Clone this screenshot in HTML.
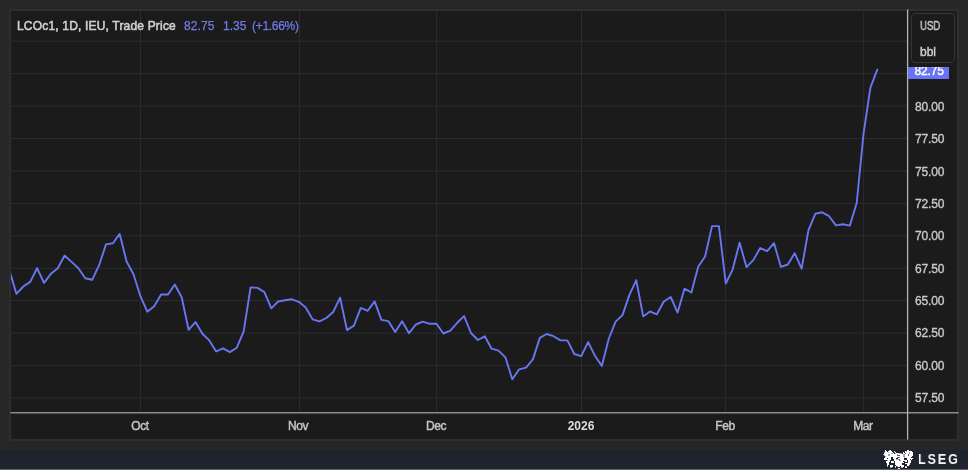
<!DOCTYPE html>
<html><head><meta charset="utf-8"><title>LCOc1</title>
<style>
html,body{margin:0;padding:0;}
body{width:968px;height:470px;overflow:hidden;background:#262626;font-family:"Liberation Sans",sans-serif;position:relative;}
#panel{position:absolute;left:9px;top:9px;width:946px;height:428px;background:#1b1b1b;border:2px solid #2e2e2e;}
#footer{position:absolute;left:0;top:450px;width:968px;height:20px;background:#1f232e;}
#footer:after{content:"";position:absolute;left:0;bottom:0;width:968px;height:1.3px;background:#5e636d;}
svg{position:absolute;left:0;top:0;}
.t,.yl,.xl,#last{will-change:transform;}
.t{position:absolute;white-space:nowrap;font-size:12px;line-height:16px;}
#title{left:17px;top:17px;transform:translateY(0.5px);color:#d0d0d0;-webkit-text-stroke:0.55px #d0d0d0;letter-spacing:0.18px;}
.v{top:17.5px;color:#6f7de9;-webkit-text-stroke:0.25px #6f7de9;}
#v1{left:183.8px;letter-spacing:0.12px;}
#v2{left:222.6px;}
#v3{left:251.5px;letter-spacing:-0.3px;}
.yl{position:absolute;left:915px;width:40px;font-size:12px;line-height:16px;color:#c9c9c9;-webkit-text-stroke:0.35px #c9c9c9;letter-spacing:-0.15px;white-space:nowrap;}
.xl{position:absolute;top:418.2px;width:60px;text-align:center;font-size:12px;line-height:16px;color:#c4c4c4;-webkit-text-stroke:0.45px #c4c4c4;letter-spacing:-0.45px;white-space:nowrap;}
.xl.b{color:#dcdcdc;font-weight:bold;-webkit-text-stroke:0;letter-spacing:0;}
#unit{position:absolute;left:910.5px;top:12.5px;width:42px;height:48px;border:1px solid #353535;border-radius:4px;}
#usd{left:919.6px;top:18.3px;color:#d0d0d0;-webkit-text-stroke:0.4px #d0d0d0;transform:scaleX(0.8);transform-origin:0 0;}
#bbl{left:919.8px;top:43.7px;color:#d0d0d0;-webkit-text-stroke:0.4px #d0d0d0;}
#last{position:absolute;left:908.4px;top:66.7px;width:40.8px;height:12.4px;background:#6874f4;overflow:hidden;}
#last span{position:absolute;left:6.5px;top:-3.9px;color:#fff;font-size:12px;line-height:16px;-webkit-text-stroke:0.4px #fff;letter-spacing:-0.15px;white-space:nowrap;}
#lseg{left:918.4px;top:449.7px;font-size:15.4px;line-height:18px;color:#f6f6f6;font-weight:bold;letter-spacing:2.35px;transform:scaleX(0.815);transform-origin:0 0;}
</style></head><body>
<div id="panel"></div>
<div id="footer"></div>
<svg width="968" height="470" viewBox="0 0 968 470">
<g stroke="#2c2d31" stroke-width="1" fill="none">
<line x1="11" x2="907" y1="41.2" y2="41.2"/>
<line x1="11" x2="907" y1="73.7" y2="73.7"/>
<line x1="11" x2="907" y1="106.1" y2="106.1"/>
<line x1="11" x2="907" y1="138.5" y2="138.5"/>
<line x1="11" x2="907" y1="171.0" y2="171.0"/>
<line x1="11" x2="907" y1="203.4" y2="203.4"/>
<line x1="11" x2="907" y1="235.8" y2="235.8"/>
<line x1="11" x2="907" y1="268.3" y2="268.3"/>
<line x1="11" x2="907" y1="300.7" y2="300.7"/>
<line x1="11" x2="907" y1="333.1" y2="333.1"/>
<line x1="11" x2="907" y1="365.6" y2="365.6"/>
<line x1="11" x2="907" y1="398.0" y2="398.0"/>
<line x1="140.4" x2="140.4" y1="11" y2="412"/>
<line x1="299.6" x2="299.6" y1="11" y2="412"/>
<line x1="436.7" x2="436.7" y1="11" y2="412"/>
<line x1="581.5" x2="581.5" y1="11" y2="412"/>
<line x1="725.4" x2="725.4" y1="11" y2="412"/>
<line x1="863.7" x2="863.7" y1="11" y2="412"/>
</g>
<line x1="10.5" x2="958.5" y1="412.8" y2="412.8" stroke="#8c8c8c" stroke-width="1.4"/>
<line x1="907.6" x2="907.6" y1="9.5" y2="439.5" stroke="#b4b4b4" stroke-width="1.3"/>
<clipPath id="cp"><rect x="11" y="11" width="896" height="401"/></clipPath>
<polyline clip-path="url(#cp)" points="9.6,271.0 16.4,293.8 23.3,286.5 30.2,281.9 37.1,268.2 44.0,282.8 50.9,273.8 57.8,268.2 64.6,255.5 71.5,261.9 78.4,268.2 85.3,278.3 92.2,279.8 99.1,265.2 106.0,244.4 112.9,243.2 119.7,233.9 126.6,261.5 133.5,274.3 140.4,296.2 147.3,311.7 154.2,306.2 161.1,294.5 168.0,294.5 174.8,284.5 181.7,297.2 188.6,329.8 195.5,322.1 202.4,333.8 209.3,340.4 216.2,351.5 223.0,348.3 229.9,352.1 236.8,347.7 243.7,331.3 250.6,287.4 257.5,287.9 264.4,292.1 271.3,308.3 278.1,301.5 285.0,300.3 291.9,299.3 298.8,301.8 305.7,307.4 312.6,319.3 319.5,321.4 326.4,318.0 333.2,312.0 340.1,297.7 347.0,330.1 353.9,325.6 360.8,307.9 367.7,310.8 374.6,301.4 381.4,319.9 388.3,321.1 395.2,332.1 402.1,321.2 409.0,333.2 415.9,324.5 422.8,321.6 429.7,323.8 436.5,323.8 443.4,333.5 450.3,330.6 457.2,322.8 464.1,316.1 471.0,333.0 477.9,340.0 484.8,336.3 491.6,348.7 498.5,350.6 505.4,357.4 512.3,379.2 519.2,369.3 526.1,367.6 533.0,359.1 539.8,337.9 546.7,334.0 553.6,336.2 560.5,340.4 567.4,340.4 574.3,354.0 581.2,356.1 588.1,342.1 594.9,355.7 601.8,365.9 608.7,339.0 615.6,321.6 622.5,315.1 629.4,294.9 636.3,280.2 643.2,316.4 650.0,311.5 656.9,314.3 663.8,301.5 670.7,297.0 677.6,312.6 684.5,288.7 691.4,292.5 698.2,266.7 705.1,256.5 712.0,226.1 718.9,226.1 725.8,283.5 732.7,269.3 739.6,242.7 746.5,267.1 753.3,260.1 760.2,248.0 767.1,251.2 774.0,243.1 780.9,266.9 787.8,264.5 794.7,253.2 801.6,268.7 808.4,230.4 815.3,213.8 822.2,212.3 829.1,216.2 836.0,225.4 842.9,224.2 849.8,225.6 856.7,203.0 863.5,134.0 870.4,87.7 877.3,69.6" fill="none" stroke="#6876f2" stroke-width="1.9" stroke-linejoin="round" stroke-linecap="round"/>
<filter id="bl" x="-10%" y="-10%" width="120%" height="120%"><feGaussianBlur stdDeviation="0.4"/></filter>
<g fill="#ffffff" filter="url(#bl)"><rect x="883" y="454" width="1" height="1" opacity="0.6"/><rect x="884" y="452" width="1" height="1" opacity="0.6"/><rect x="884" y="453" width="1" height="1" opacity="1"/><rect x="884" y="454" width="1" height="1" opacity="1"/><rect x="884" y="455" width="1" height="1" opacity="0.6"/><rect x="884" y="458" width="1" height="1" opacity="1"/><rect x="884" y="459" width="1" height="1" opacity="1"/><rect x="885" y="450" width="1" height="1" opacity="1"/><rect x="885" y="451" width="1" height="1" opacity="1"/><rect x="885" y="452" width="1" height="1" opacity="1"/><rect x="885" y="453" width="1" height="1" opacity="1"/><rect x="885" y="454" width="1" height="1" opacity="1"/><rect x="885" y="455" width="1" height="1" opacity="1"/><rect x="885" y="456" width="1" height="1" opacity="0.6"/><rect x="885" y="457" width="1" height="1" opacity="1"/><rect x="885" y="458" width="1" height="1" opacity="1"/><rect x="885" y="459" width="1" height="1" opacity="1"/><rect x="886" y="451" width="1" height="1" opacity="1"/><rect x="886" y="452" width="1" height="1" opacity="1"/><rect x="886" y="453" width="1" height="1" opacity="1"/><rect x="886" y="454" width="1" height="1" opacity="1"/><rect x="886" y="455" width="1" height="1" opacity="1"/><rect x="886" y="456" width="1" height="1" opacity="1"/><rect x="886" y="457" width="1" height="1" opacity="1"/><rect x="886" y="458" width="1" height="1" opacity="1"/><rect x="886" y="459" width="1" height="1" opacity="1"/><rect x="886" y="461" width="1" height="1" opacity="1"/><rect x="886" y="462" width="1" height="1" opacity="1"/><rect x="887" y="452" width="1" height="1" opacity="1"/><rect x="887" y="453" width="1" height="1" opacity="1"/><rect x="887" y="454" width="1" height="1" opacity="1"/><rect x="887" y="455" width="1" height="1" opacity="1"/><rect x="887" y="456" width="1" height="1" opacity="1"/><rect x="887" y="457" width="1" height="1" opacity="1"/><rect x="887" y="459" width="1" height="1" opacity="1"/><rect x="887" y="460" width="1" height="1" opacity="0.6"/><rect x="887" y="461" width="1" height="1" opacity="1"/><rect x="887" y="462" width="1" height="1" opacity="1"/><rect x="887" y="463" width="1" height="1" opacity="1"/><rect x="887" y="464" width="1" height="1" opacity="1"/><rect x="887" y="465" width="1" height="1" opacity="1"/><rect x="887" y="466" width="1" height="1" opacity="0.6"/><rect x="888" y="451" width="1" height="1" opacity="1"/><rect x="888" y="452" width="1" height="1" opacity="0.6"/><rect x="888" y="453" width="1" height="1" opacity="1"/><rect x="888" y="454" width="1" height="1" opacity="0.6"/><rect x="888" y="455" width="1" height="1" opacity="0.6"/><rect x="888" y="456" width="1" height="1" opacity="1"/><rect x="888" y="457" width="1" height="1" opacity="1"/><rect x="888" y="458" width="1" height="1" opacity="1"/><rect x="888" y="459" width="1" height="1" opacity="1"/><rect x="888" y="460" width="1" height="1" opacity="1"/><rect x="888" y="461" width="1" height="1" opacity="1"/><rect x="888" y="462" width="1" height="1" opacity="1"/><rect x="888" y="463" width="1" height="1" opacity="1"/><rect x="888" y="464" width="1" height="1" opacity="1"/><rect x="889" y="450" width="1" height="1" opacity="0.6"/><rect x="889" y="451" width="1" height="1" opacity="1"/><rect x="889" y="452" width="1" height="1" opacity="1"/><rect x="889" y="453" width="1" height="1" opacity="1"/><rect x="889" y="454" width="1" height="1" opacity="0.6"/><rect x="889" y="455" width="1" height="1" opacity="0.6"/><rect x="889" y="456" width="1" height="1" opacity="1"/><rect x="889" y="457" width="1" height="1" opacity="1"/><rect x="889" y="458" width="1" height="1" opacity="1"/><rect x="889" y="459" width="1" height="1" opacity="1"/><rect x="889" y="460" width="1" height="1" opacity="1"/><rect x="889" y="461" width="1" height="1" opacity="1"/><rect x="890" y="450" width="1" height="1" opacity="1"/><rect x="890" y="451" width="1" height="1" opacity="1"/><rect x="890" y="452" width="1" height="1" opacity="1"/><rect x="890" y="453" width="1" height="1" opacity="1"/><rect x="890" y="454" width="1" height="1" opacity="1"/><rect x="890" y="455" width="1" height="1" opacity="1"/><rect x="890" y="456" width="1" height="1" opacity="1"/><rect x="890" y="457" width="1" height="1" opacity="1"/><rect x="890" y="458" width="1" height="1" opacity="1"/><rect x="890" y="459" width="1" height="1" opacity="1"/><rect x="890" y="465" width="1" height="1" opacity="1"/><rect x="890" y="466" width="1" height="1" opacity="1"/><rect x="890" y="467" width="1" height="1" opacity="0.6"/><rect x="891" y="451" width="1" height="1" opacity="1"/><rect x="891" y="452" width="1" height="1" opacity="1"/><rect x="891" y="453" width="1" height="1" opacity="0.6"/><rect x="891" y="454" width="1" height="1" opacity="1"/><rect x="891" y="455" width="1" height="1" opacity="1"/><rect x="891" y="456" width="1" height="1" opacity="1"/><rect x="891" y="461" width="1" height="1" opacity="1"/><rect x="891" y="462" width="1" height="1" opacity="1"/><rect x="891" y="465" width="1" height="1" opacity="1"/><rect x="891" y="466" width="1" height="1" opacity="1"/><rect x="891" y="467" width="1" height="1" opacity="0.6"/><rect x="892" y="452" width="1" height="1" opacity="1"/><rect x="892" y="453" width="1" height="1" opacity="0.6"/><rect x="892" y="454" width="1" height="1" opacity="1"/><rect x="892" y="455" width="1" height="1" opacity="1"/><rect x="892" y="456" width="1" height="1" opacity="1"/><rect x="892" y="461" width="1" height="1" opacity="1"/><rect x="892" y="462" width="1" height="1" opacity="1"/><rect x="892" y="465" width="1" height="1" opacity="1"/><rect x="892" y="466" width="1" height="1" opacity="1"/><rect x="893" y="453" width="1" height="1" opacity="1"/><rect x="893" y="454" width="1" height="1" opacity="1"/><rect x="893" y="455" width="1" height="1" opacity="1"/><rect x="893" y="456" width="1" height="1" opacity="1"/><rect x="893" y="457" width="1" height="1" opacity="1"/><rect x="893" y="458" width="1" height="1" opacity="1"/><rect x="893" y="461" width="1" height="1" opacity="1"/><rect x="893" y="462" width="1" height="1" opacity="1"/><rect x="894" y="451" width="1" height="1" opacity="1"/><rect x="894" y="454" width="1" height="1" opacity="1"/><rect x="894" y="455" width="1" height="1" opacity="1"/><rect x="894" y="456" width="1" height="1" opacity="1"/><rect x="894" y="457" width="1" height="1" opacity="1"/><rect x="894" y="458" width="1" height="1" opacity="1"/><rect x="894" y="459" width="1" height="1" opacity="1"/><rect x="894" y="460" width="1" height="1" opacity="1"/><rect x="895" y="452" width="1" height="1" opacity="1"/><rect x="895" y="453" width="1" height="1" opacity="0.6"/><rect x="895" y="454" width="1" height="1" opacity="1"/><rect x="895" y="455" width="1" height="1" opacity="1"/><rect x="895" y="456" width="1" height="1" opacity="1"/><rect x="895" y="457" width="1" height="1" opacity="1"/><rect x="895" y="458" width="1" height="1" opacity="1"/><rect x="895" y="459" width="1" height="1" opacity="1"/><rect x="895" y="460" width="1" height="1" opacity="1"/><rect x="895" y="461" width="1" height="1" opacity="1"/><rect x="895" y="462" width="1" height="1" opacity="1"/><rect x="895" y="463" width="1" height="1" opacity="1"/><rect x="895" y="464" width="1" height="1" opacity="1"/><rect x="895" y="466" width="1" height="1" opacity="1"/><rect x="895" y="467" width="1" height="1" opacity="0.6"/><rect x="896" y="453" width="1" height="1" opacity="1"/><rect x="896" y="454" width="1" height="1" opacity="1"/><rect x="896" y="455" width="1" height="1" opacity="1"/><rect x="896" y="456" width="1" height="1" opacity="1"/><rect x="896" y="457" width="1" height="1" opacity="1"/><rect x="896" y="459" width="1" height="1" opacity="0.6"/><rect x="896" y="460" width="1" height="1" opacity="1"/><rect x="896" y="461" width="1" height="1" opacity="1"/><rect x="896" y="462" width="1" height="1" opacity="1"/><rect x="896" y="463" width="1" height="1" opacity="1"/><rect x="896" y="464" width="1" height="1" opacity="1"/><rect x="896" y="465" width="1" height="1" opacity="1"/><rect x="897" y="453" width="1" height="1" opacity="1"/><rect x="897" y="454" width="1" height="1" opacity="0.6"/><rect x="897" y="455" width="1" height="1" opacity="0.28"/><rect x="897" y="456" width="1" height="1" opacity="1"/><rect x="897" y="457" width="1" height="1" opacity="0.28"/><rect x="897" y="459" width="1" height="1" opacity="0.6"/><rect x="897" y="460" width="1" height="1" opacity="1"/><rect x="897" y="461" width="1" height="1" opacity="1"/><rect x="897" y="462" width="1" height="1" opacity="1"/><rect x="897" y="463" width="1" height="1" opacity="1"/><rect x="897" y="464" width="1" height="1" opacity="1"/><rect x="897" y="465" width="1" height="1" opacity="1"/><rect x="897" y="466" width="1" height="1" opacity="0.6"/><rect x="898" y="453" width="1" height="1" opacity="1"/><rect x="898" y="454" width="1" height="1" opacity="1"/><rect x="898" y="455" width="1" height="1" opacity="0.28"/><rect x="898" y="456" width="1" height="1" opacity="1"/><rect x="898" y="457" width="1" height="1" opacity="0.28"/><rect x="898" y="458" width="1" height="1" opacity="1"/><rect x="898" y="459" width="1" height="1" opacity="0.6"/><rect x="898" y="460" width="1" height="1" opacity="1"/><rect x="898" y="461" width="1" height="1" opacity="1"/><rect x="898" y="462" width="1" height="1" opacity="1"/><rect x="898" y="463" width="1" height="1" opacity="1"/><rect x="898" y="464" width="1" height="1" opacity="1"/><rect x="898" y="465" width="1" height="1" opacity="1"/><rect x="898" y="466" width="1" height="1" opacity="1"/><rect x="898" y="468" width="1" height="1" opacity="1"/><rect x="899" y="453" width="1" height="1" opacity="0.6"/><rect x="899" y="454" width="1" height="1" opacity="1"/><rect x="899" y="455" width="1" height="1" opacity="0.28"/><rect x="899" y="456" width="1" height="1" opacity="1"/><rect x="899" y="457" width="1" height="1" opacity="0.28"/><rect x="899" y="458" width="1" height="1" opacity="1"/><rect x="899" y="459" width="1" height="1" opacity="0.28"/><rect x="899" y="460" width="1" height="1" opacity="0.28"/><rect x="899" y="461" width="1" height="1" opacity="1"/><rect x="899" y="462" width="1" height="1" opacity="1"/><rect x="899" y="463" width="1" height="1" opacity="1"/><rect x="899" y="464" width="1" height="1" opacity="1"/><rect x="899" y="465" width="1" height="1" opacity="1"/><rect x="899" y="466" width="1" height="1" opacity="1"/><rect x="899" y="468" width="1" height="1" opacity="1"/><rect x="900" y="453" width="1" height="1" opacity="0.6"/><rect x="900" y="454" width="1" height="1" opacity="1"/><rect x="900" y="455" width="1" height="1" opacity="1"/><rect x="900" y="456" width="1" height="1" opacity="1"/><rect x="900" y="457" width="1" height="1" opacity="1"/><rect x="900" y="458" width="1" height="1" opacity="1"/><rect x="900" y="459" width="1" height="1" opacity="1"/><rect x="900" y="460" width="1" height="1" opacity="0.6"/><rect x="900" y="461" width="1" height="1" opacity="1"/><rect x="900" y="462" width="1" height="1" opacity="1"/><rect x="900" y="463" width="1" height="1" opacity="1"/><rect x="900" y="464" width="1" height="1" opacity="1"/><rect x="900" y="465" width="1" height="1" opacity="1"/><rect x="901" y="453" width="1" height="1" opacity="0.6"/><rect x="901" y="454" width="1" height="1" opacity="1"/><rect x="901" y="455" width="1" height="1" opacity="1"/><rect x="901" y="456" width="1" height="1" opacity="1"/><rect x="901" y="457" width="1" height="1" opacity="1"/><rect x="901" y="458" width="1" height="1" opacity="1"/><rect x="901" y="459" width="1" height="1" opacity="1"/><rect x="901" y="460" width="1" height="1" opacity="1"/><rect x="901" y="461" width="1" height="1" opacity="1"/><rect x="901" y="462" width="1" height="1" opacity="1"/><rect x="901" y="463" width="1" height="1" opacity="1"/><rect x="901" y="464" width="1" height="1" opacity="1"/><rect x="901" y="465" width="1" height="1" opacity="1"/><rect x="901" y="466" width="1" height="1" opacity="1"/><rect x="901" y="467" width="1" height="1" opacity="0.6"/><rect x="902" y="454" width="1" height="1" opacity="1"/><rect x="902" y="455" width="1" height="1" opacity="1"/><rect x="902" y="456" width="1" height="1" opacity="1"/><rect x="902" y="457" width="1" height="1" opacity="1"/><rect x="902" y="458" width="1" height="1" opacity="1"/><rect x="902" y="459" width="1" height="1" opacity="1"/><rect x="902" y="460" width="1" height="1" opacity="1"/><rect x="902" y="461" width="1" height="1" opacity="1"/><rect x="902" y="462" width="1" height="1" opacity="1"/><rect x="902" y="465" width="1" height="1" opacity="1"/><rect x="902" y="466" width="1" height="1" opacity="1"/><rect x="902" y="467" width="1" height="1" opacity="0.6"/><rect x="903" y="452" width="1" height="1" opacity="1"/><rect x="903" y="453" width="1" height="1" opacity="1"/><rect x="903" y="454" width="1" height="1" opacity="0.6"/><rect x="903" y="455" width="1" height="1" opacity="0.6"/><rect x="903" y="456" width="1" height="1" opacity="0.6"/><rect x="903" y="457" width="1" height="1" opacity="1"/><rect x="903" y="458" width="1" height="1" opacity="1"/><rect x="903" y="459" width="1" height="1" opacity="1"/><rect x="903" y="460" width="1" height="1" opacity="1"/><rect x="903" y="462" width="1" height="1" opacity="1"/><rect x="903" y="465" width="1" height="1" opacity="1"/><rect x="903" y="466" width="1" height="1" opacity="1"/><rect x="904" y="453" width="1" height="1" opacity="1"/><rect x="904" y="454" width="1" height="1" opacity="0.6"/><rect x="904" y="455" width="1" height="1" opacity="0.6"/><rect x="904" y="456" width="1" height="1" opacity="0.6"/><rect x="904" y="457" width="1" height="1" opacity="0.6"/><rect x="904" y="460" width="1" height="1" opacity="1"/><rect x="905" y="451" width="1" height="1" opacity="1"/><rect x="905" y="452" width="1" height="1" opacity="1"/><rect x="905" y="453" width="1" height="1" opacity="0.28"/><rect x="905" y="454" width="1" height="1" opacity="1"/><rect x="905" y="455" width="1" height="1" opacity="1"/><rect x="905" y="456" width="1" height="1" opacity="1"/><rect x="905" y="457" width="1" height="1" opacity="1"/><rect x="905" y="460" width="1" height="1" opacity="1"/><rect x="905" y="461" width="1" height="1" opacity="1"/><rect x="905" y="463" width="1" height="1" opacity="1"/><rect x="905" y="466" width="1" height="1" opacity="0.6"/><rect x="905" y="467" width="1" height="1" opacity="1"/><rect x="906" y="451" width="1" height="1" opacity="0.6"/><rect x="906" y="452" width="1" height="1" opacity="1"/><rect x="906" y="453" width="1" height="1" opacity="1"/><rect x="906" y="454" width="1" height="1" opacity="1"/><rect x="906" y="455" width="1" height="1" opacity="1"/><rect x="906" y="456" width="1" height="1" opacity="1"/><rect x="906" y="457" width="1" height="1" opacity="1"/><rect x="906" y="460" width="1" height="1" opacity="1"/><rect x="906" y="461" width="1" height="1" opacity="1"/><rect x="906" y="463" width="1" height="1" opacity="1"/><rect x="906" y="466" width="1" height="1" opacity="0.6"/><rect x="906" y="467" width="1" height="1" opacity="1"/><rect x="907" y="450" width="1" height="1" opacity="1"/><rect x="907" y="451" width="1" height="1" opacity="1"/><rect x="907" y="452" width="1" height="1" opacity="1"/><rect x="907" y="453" width="1" height="1" opacity="1"/><rect x="907" y="454" width="1" height="1" opacity="1"/><rect x="907" y="455" width="1" height="1" opacity="1"/><rect x="907" y="456" width="1" height="1" opacity="1"/><rect x="907" y="457" width="1" height="1" opacity="1"/><rect x="907" y="458" width="1" height="1" opacity="1"/><rect x="907" y="459" width="1" height="1" opacity="1"/><rect x="907" y="463" width="1" height="1" opacity="1"/><rect x="907" y="464" width="1" height="1" opacity="1"/><rect x="907" y="465" width="1" height="1" opacity="1"/><rect x="908" y="450" width="1" height="1" opacity="1"/><rect x="908" y="451" width="1" height="1" opacity="1"/><rect x="908" y="452" width="1" height="1" opacity="1"/><rect x="908" y="453" width="1" height="1" opacity="1"/><rect x="908" y="454" width="1" height="1" opacity="0.28"/><rect x="908" y="455" width="1" height="1" opacity="0.28"/><rect x="908" y="456" width="1" height="1" opacity="1"/><rect x="908" y="457" width="1" height="1" opacity="1"/><rect x="908" y="458" width="1" height="1" opacity="1"/><rect x="908" y="459" width="1" height="1" opacity="1"/><rect x="908" y="460" width="1" height="1" opacity="1"/><rect x="908" y="461" width="1" height="1" opacity="1"/><rect x="908" y="462" width="1" height="1" opacity="1"/><rect x="908" y="463" width="1" height="1" opacity="1"/><rect x="908" y="464" width="1" height="1" opacity="1"/><rect x="908" y="465" width="1" height="1" opacity="1"/><rect x="909" y="451" width="1" height="1" opacity="1"/><rect x="909" y="452" width="1" height="1" opacity="0.6"/><rect x="909" y="453" width="1" height="1" opacity="0.6"/><rect x="909" y="454" width="1" height="1" opacity="1"/><rect x="909" y="455" width="1" height="1" opacity="1"/><rect x="909" y="456" width="1" height="1" opacity="1"/><rect x="909" y="457" width="1" height="1" opacity="1"/><rect x="909" y="458" width="1" height="1" opacity="1"/><rect x="909" y="459" width="1" height="1" opacity="1"/><rect x="909" y="460" width="1" height="1" opacity="1"/><rect x="909" y="461" width="1" height="1" opacity="1"/><rect x="909" y="462" width="1" height="1" opacity="1"/><rect x="909" y="463" width="1" height="1" opacity="1"/><rect x="909" y="464" width="1" height="1" opacity="1"/><rect x="910" y="451" width="1" height="1" opacity="1"/><rect x="910" y="452" width="1" height="1" opacity="1"/><rect x="910" y="453" width="1" height="1" opacity="1"/><rect x="910" y="454" width="1" height="1" opacity="1"/><rect x="910" y="455" width="1" height="1" opacity="1"/><rect x="910" y="456" width="1" height="1" opacity="1"/><rect x="910" y="457" width="1" height="1" opacity="1"/><rect x="910" y="458" width="1" height="1" opacity="1"/><rect x="910" y="460" width="1" height="1" opacity="1"/><rect x="910" y="461" width="1" height="1" opacity="1"/><rect x="910" y="462" width="1" height="1" opacity="1"/><rect x="911" y="451" width="1" height="1" opacity="1"/><rect x="911" y="452" width="1" height="1" opacity="1"/><rect x="911" y="453" width="1" height="1" opacity="1"/><rect x="911" y="454" width="1" height="1" opacity="1"/><rect x="911" y="455" width="1" height="1" opacity="1"/><rect x="911" y="456" width="1" height="1" opacity="1"/><rect x="911" y="458" width="1" height="1" opacity="1"/><rect x="911" y="459" width="1" height="1" opacity="1"/><rect x="912" y="452" width="1" height="1" opacity="1"/><rect x="912" y="453" width="1" height="1" opacity="1"/><rect x="912" y="454" width="1" height="1" opacity="1"/><rect x="912" y="455" width="1" height="1" opacity="1"/><rect x="912" y="458" width="1" height="1" opacity="1"/></g>
</svg>
<div class="t" id="title">LCOc1, 1D, IEU, Trade Price</div>
<div class="t v" id="v1">82.75</div>
<div class="t v" id="v2">1.35</div>
<div class="t v" id="v3">(+1.66%)</div>
<div id="unit"></div>
<div class="t" id="usd">USD</div>
<div class="t" id="bbl">bbl</div>
<div id="last"><span>82.75</span></div>
<div class="yl" style="top:98.8px">80.00</div>
<div class="yl" style="top:131.2px">77.50</div>
<div class="yl" style="top:163.6px">75.00</div>
<div class="yl" style="top:195.9px">72.50</div>
<div class="yl" style="top:228.3px">70.00</div>
<div class="yl" style="top:260.7px">67.50</div>
<div class="yl" style="top:293.0px">65.00</div>
<div class="yl" style="top:325.4px">62.50</div>
<div class="yl" style="top:357.8px">60.00</div>
<div class="yl" style="top:390.1px">57.50</div>
<div class="xl" style="left:110.0px">Oct</div>
<div class="xl" style="left:268.4px">Nov</div>
<div class="xl" style="left:405.8px">Dec</div>
<div class="xl b" style="left:551.4px">2026</div>
<div class="xl" style="left:694.6px">Feb</div>
<div class="xl" style="left:832.9px">Mar</div>
<div class="t" id="lseg">LSEG</div>
</body></html>
